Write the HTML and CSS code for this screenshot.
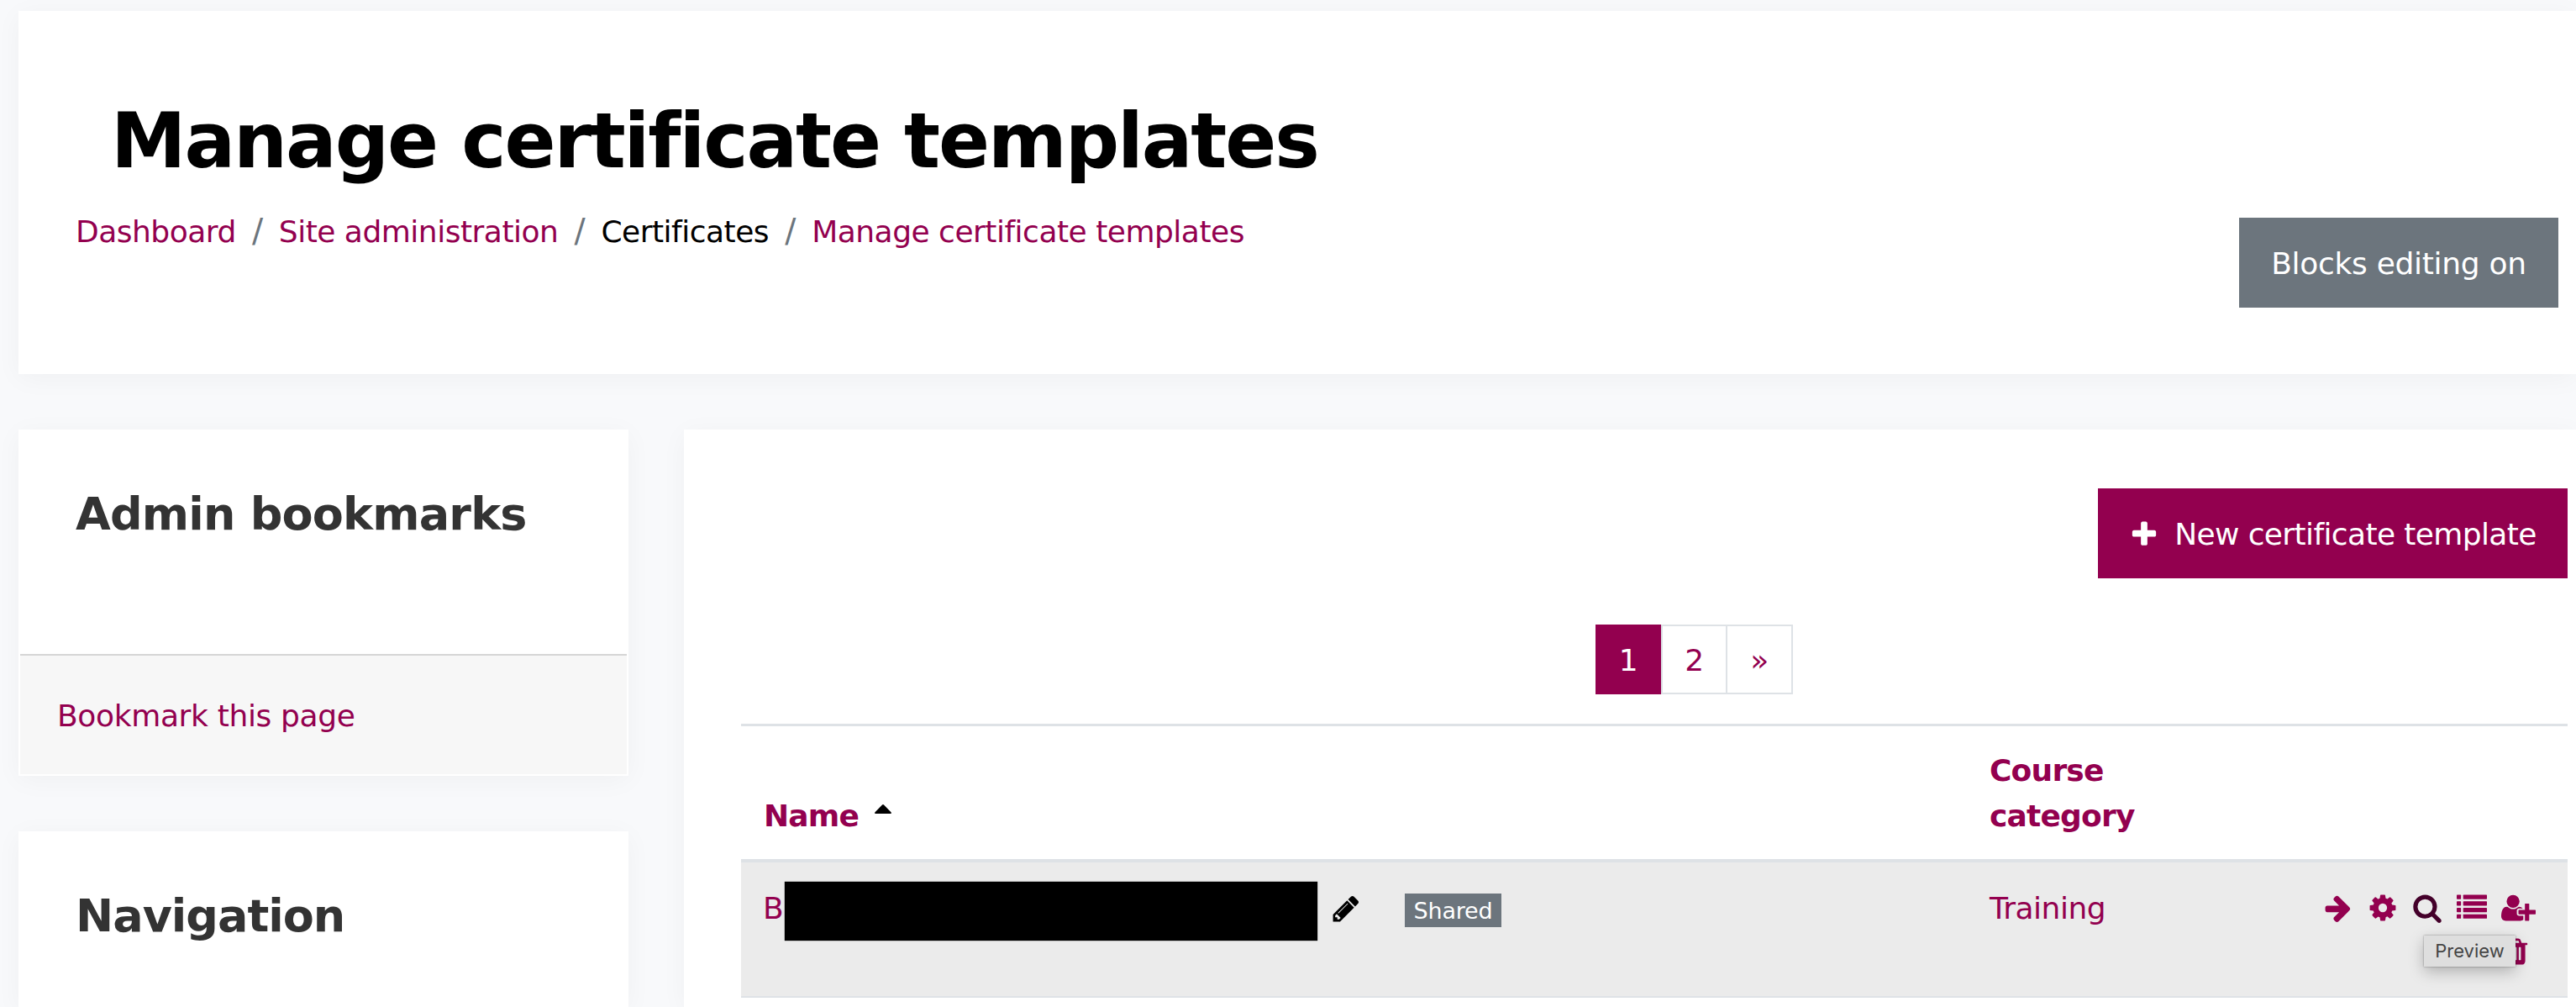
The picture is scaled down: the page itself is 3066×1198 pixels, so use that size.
FILE: index.html
```html
<!DOCTYPE html>
<html lang="en">
<head>
    <meta charset="UTF-8">
    <title>Manage certificate templates</title>
    <link rel="stylesheet" href="styles.css">
</head>
<body>
<header id="page-header" class="card">
    <h1>Manage certificate templates</h1>
    <div class="header-row">
        <ol class="breadcrumb">
            <li><a href="#">Dashboard</a></li>
            <li><a href="#">Site administration</a></li>
            <li>Certificates</li>
            <li><a href="#">Manage certificate templates</a></li>
        </ol>
        <button class="btn btn-secondary">Blocks editing on</button>
    </div>
</header>

<div id="page-content">
    <aside class="sidebar">
        <section class="card block">
            <h2>Admin bookmarks</h2>
            <div class="block-footer"><a href="#">Bookmark this page</a></div>
        </section>
        <section class="card block block-nav">
            <h2>Navigation</h2>
        </section>
    </aside>

    <main class="card main">
        <div class="toolbar">
            <button class="btn btn-primary">
                <svg class="icon" viewBox="0 0 1792 1792"><path d="M1600 736v192q0 40-28 68t-68 28h-416v416q0 40-28 68t-68 28h-192q-40 0-68-28t-28-68v-416h-416q-40 0-68-28t-28-68v-192q0-40 28-68t68-28h416v-416q0-40 28-68t68-28h192q40 0 68 28t28 68v416h416q40 0 68 28t28 68z"/></svg>
                <span>New certificate template</span>
            </button>
        </div>

        <ul class="pagination">
            <li class="active"><a href="#">1</a></li>
            <li><a href="#">2</a></li>
            <li><a href="#">»</a></li>
        </ul>

        <table>
            <thead>
                <tr>
                    <th class="col-name"><a href="#">Name</a><svg class="sort" viewBox="0 0 20 11"><path d="M1 11h18q1.500-.5.500-1.700L11 .6q-1-1-2 0L.5 9.300Q-.5 10.500 1 11z"/></svg></th>
                    <th class="col-category"><a href="#">Course<br>category</a></th>
                    <th></th>
                </tr>
            </thead>
            <tbody>
                <tr>
                    <td>
                        <div class="template-name">
                            <a href="#">B</a>
                            <span class="redacted"></span>
                            <svg class="icon edit" viewBox="0 0 1792 1792"><path d="M491 1536l91-91-235-235-91 91v107h128v128h107zm523-928q0-22-22-22-10 0-17 7l-542 542q-7 7-7 17 0 22 22 22 10 0 17-7l542-542q7-7 7-17zm-54-192l416 416-832 832h-416v-416zm683 96q0 53-37 90l-166 166-416-416 166-165q36-38 90-38 53 0 91 38l235 234q37 39 37 91z"/></svg>
                            <span class="badge">Shared</span>
                        </div>
                    </td>
                    <td class="category"><a href="#">Training</a></td>
                    <td>
                        <div class="actions">
                            <a href="#"><svg class="icon" viewBox="0 0 1792 1792"><path d="M1600 960q0 54-37 91l-651 651q-39 37-91 37-51 0-90-37l-75-75q-38-38-38-91t38-91l293-293h-704q-52 0-84.500-37.500t-32.500-90.500v-128q0-53 32.500-90.500t84.500-37.500h704l-293-294q-38-36-38-90t38-90l75-75q38-38 90-38 53 0 91 38l651 651q37 35 37 90z"/></svg></a>
                            <a href="#"><svg class="icon" viewBox="0 0 1792 1792"><path d="M1152 896q0-106-75-181t-181-75-181 75-75 181 75 181 181 75 181-75 75-181zm512-109v222q0 12-8 23t-20 13l-185 28q-19 54-39 91 35 50 107 138 10 12 10 25t-9 23q-27 37-99 108t-94 71q-12 0-26-9l-138-108q-44 23-91 38-16 136-29 186-7 28-36 28h-222q-14 0-24.500-8.500t-11.500-21.500l-28-184q-49-16-90-37l-141 107q-10 9-25 9-14 0-25-11-126-114-165-168-7-10-7-23 0-12 8-23 15-21 51-66.500t54-70.500q-27-50-41-99l-183-27q-13-2-21-12.500t-8-23.500v-222q0-12 8-23t19-13l186-28q14-46 39-92-40-57-107-138-10-12-10-24 0-10 9-23 26-36 98.500-107.500t94.500-71.500q13 0 26 10l138 107q44-23 91-38 16-136 29-186 7-28 36-28h222q14 0 24.500 8.500t11.500 21.500l28 184q49 16 90 37l142-107q9-9 24-9 13 0 25 10 129 119 165 170 7 8 7 22 0 12-8 23-15 21-51 66.500t-54 70.500q26 50 41 98l183 28q13 2 21 12.500t8 23.500z"/></svg></a>
                            <a href="#" class="preview">
                                <svg class="icon" viewBox="0 0 1792 1792"><path d="M1216 832q0-185-131.500-316.500t-316.500-131.500-316.500 131.500-131.500 316.500 131.500 316.500 316.500 131.500 316.500-131.500 131.500-316.500zm512 832q0 52-38 90t-90 38q-54 0-90-38l-343-342q-179 124-399 124-143 0-273.500-55.500t-225-150-150-225-55.500-273.500 55.500-273.500 150-225 225-150 273.500-55.500 273.500 55.500 225 150 150 225 55.500 273.500q0 220-124 399l343 343q37 37 37 90z"/></svg>
                                <span class="tooltip">Preview</span>
                            </a>
                            <a href="#"><svg class="icon" viewBox="0 0 1792 1792">
                                <rect x="0" y="128" width="256" height="256" rx="32"/><rect x="384" y="128" width="1408" height="256" rx="32"/>
                                <rect x="0" y="512" width="256" height="256" rx="32"/><rect x="384" y="512" width="1408" height="256" rx="32"/>
                                <rect x="0" y="896" width="256" height="256" rx="32"/><rect x="384" y="896" width="1408" height="256" rx="32"/>
                                <rect x="0" y="1280" width="256" height="256" rx="32"/><rect x="384" y="1280" width="1408" height="256" rx="32"/>
                            </svg></a>
                            <a href="#"><svg class="icon icon-wide" viewBox="0 0 2048 1792"><path d="M704 896q-159 0-271.500-112.500t-112.500-271.500 112.500-271.500 271.500-112.500 271.500 112.500 112.500 271.500-112.500 271.500-271.500 112.500zm960 128h352q13 0 22.500 9.500t9.500 22.500v192q0 13-9.500 22.500t-22.500 9.500h-352v352q0 13-9.500 22.500t-22.500 9.500h-192q-13 0-22.500-9.500t-9.500-22.500v-352h-352q-13 0-22.500-9.500t-9.500-22.500v-192q0-13 9.500-22.500t22.500-9.500h352v-352q0-13 9.500-22.500t22.500-9.500h192q13 0 22.500 9.500t9.500 22.500v352zm-736 224q0 52 38 90t90 38h256v238q-68 50-171 50h-874q-121 0-194-69t-73-190q0-53 3.500-103.500t14-109 26.500-108.500 43-97.500 62-81 85.500-53.500 111.500-20q19 0 39 17 79 61 154.500 91.500t164.500 30.500 164.500-30.500 154.500-91.500q20-17 39-17 132 0 217 96h-223q-52 0-90 38t-38 90v192z"/></svg></a>
                            <a href="#" class="delete"><svg class="icon" viewBox="0 0 1792 1792"><path fill-rule="evenodd" d="M704 1376v-704q0-14-9-23t-23-9h-64q-14 0-23 9t-9 23v704q0 14 9 23t23 9h64q14 0 23-9t9-23zm256 0v-704q0-14-9-23t-23-9h-64q-14 0-23 9t-9 23v704q0 14 9 23t23 9h64q14 0 23-9t9-23zm256 0v-704q0-14-9-23t-23-9h-64q-14 0-23 9t-9 23v704q0 14 9 23t23 9h64q14 0 23-9t9-23zm-544-992h448l-48-117q-7-9-17-11h-317q-10 2-17 11zm928 32v64q0 14-9 23t-23 9h-96v948q0 83-47 143.500t-113 60.500h-832q-66 0-113-58.500t-47-141.500v-952h-96q-14 0-23-9t-9-23v-64q0-14 9-23t23-9h309l70-167q15-37 54-63t79-26h320q40 0 79 26t54 63l70 167h309q14 0 23 9t9 23z"/></svg></a>
                        </div>
                    </td>
                </tr>
            </tbody>
        </table>
    </main>
</div>
</body>
</html>
```

FILE: styles.css
```css
* {
    box-sizing: border-box;
}

body {
    margin: 0;
    padding: 13px 0 0 22px;
    height: 1198px;
    overflow: hidden;
    background-color: #f8f9fb;
    color: #000;
    font-family: Verdana, "DejaVu Sans", sans-serif;
    font-size: 36px;
    line-height: 54px;
    letter-spacing: -0.5px;
}

a {
    color: #93004f;
    text-decoration: none;
}

.card {
    background-color: #fff;
    box-shadow: 0 5px 30px rgba(0, 0, 0, 0.04);
}

.icon {
    display: block;
    width: 36px;
    height: 36px;
    fill: currentColor;
}

.icon-wide {
    width: 41px;
}

/* header */
#page-header {
    height: 432px;
    padding: 101px 21px 0 68px;
}

h1 {
    margin: 0 0 26px 42px;
    font-size: 90px;
    line-height: 108px;
    font-weight: bold;
    letter-spacing: -2.1px;
}

.header-row {
    display: flex;
    justify-content: space-between;
    align-items: flex-start;
}

.breadcrumb {
    display: flex;
    margin: 0;
    padding: 1px 0 0;
    list-style: none;
}

.breadcrumb li + li::before {
    content: "/";
    display: inline-block;
    width: 51px;
    font-size: 39px;
    line-height: 1;
    text-align: center;
    color: #6c757d;
}

.btn {
    display: flex;
    align-items: center;
    justify-content: center;
    height: 107px;
    padding: 2px 0 0;
    border: none;
    color: #fff;
    font-family: inherit;
    font-size: 36px;
    white-space: nowrap;
}

.btn-secondary {
    width: 380px;
    margin-top: 11px;
    background-color: #6c757d;
    letter-spacing: -0.3px;
}

.btn-primary {
    width: 559px;
    gap: 18px;
    background-color: #93004f;
    letter-spacing: -0.62px;
}

/* columns */
#page-content {
    display: flex;
    align-items: flex-start;
    gap: 66px;
    margin-top: 66px;
}

.sidebar {
    flex: none;
    width: 726px;
}

.block {
    height: 412px;
    margin-bottom: 66px;
    padding: 69px 2px 2px;
}

.block-nav {
    height: 209px;
    margin-bottom: 0;
}

.block h2 {
    height: 198px;
    margin: 0;
    padding-left: 66px;
    color: #333;
    font-size: 54px;
    line-height: 64px;
    letter-spacing: -0.8px;
}

.block-nav h2 {
    height: 64px;
    letter-spacing: -1px;
}

.block-footer {
    height: 143px;
    padding: 45px 0 0 44px;
    border-top: 2px solid #d6d6d6;
    background-color: #f7f7f7;
    letter-spacing: -0.35px;
}

.main {
    flex: 1;
    height: 687px;
    padding: 70px 10px 0 68px;
}

.toolbar {
    display: flex;
    justify-content: flex-end;
}

.pagination {
    display: flex;
    margin: 55px 0 35px 1017px;
    padding: 0;
    list-style: none;
}

.pagination a {
    display: block;
    width: 80px;
    height: 83px;
    border: 2px solid #dee2e6;
    line-height: 81px;
    text-align: center;
}

.pagination li:nth-child(2) a {
    width: 79px;
    margin-right: -2px;
}

.pagination .active a {
    width: 78px;
    border-color: #93004f;
    background-color: #93004f;
    color: #fff;
}

/* template list */
table {
    width: 2174px;
    table-layout: fixed;
    border-collapse: separate;
    border-spacing: 0;
}

th {
    height: 165px;
    padding: 0 0 24px 27px;
    border-top: 3px solid #dee2e6;
    border-bottom: 4px solid #dee2e6;
    text-align: left;
    vertical-align: bottom;
    letter-spacing: -0.8px;
}

.col-name {
    width: 1459px;
}

.col-category {
    width: 359px;
}

.sort {
    width: 20px;
    height: 11px;
    margin-left: 19px;
    vertical-align: 15px;
}

td {
    height: 161px;
    padding: 23px 0 0 26px;
    border-bottom: 2px solid #dee2e6;
    background-color: #ebebeb;
    vertical-align: top;
}

td.category {
    padding: 28px 0 0 27px;
}

.template-name {
    display: flex;
    align-items: flex-start;
}

.template-name a {
    width: 26px;
    padding-top: 5px;
}

.redacted {
    width: 634px;
    height: 70px;
    background-color: #000;
    box-shadow: 0 0 1px #000;
}

.edit {
    margin: 14px 52px 0 16px;
}

.badge {
    width: 115px;
    height: 40px;
    margin-top: 14px;
    background-color: #6c757d;
    color: #fff;
    font-size: 27px;
    line-height: 41px;
    letter-spacing: -0.2px;
    text-align: center;
}

.actions {
    display: flex;
    flex-wrap: wrap;
    justify-content: flex-end;
    gap: 16px 17px;
    padding: 13px 38px 0 0;
}

.actions .delete {
    margin-right: 6px;
}

.preview {
    position: relative;
    color: #44002a;
}

.tooltip {
    position: absolute;
    z-index: 1;
    top: 51px;
    left: 14px;
    width: 109px;
    height: 37px;
    background-color: #dedede;
    box-shadow: 0 0 2px rgba(0, 0, 0, 0.4), 0 6px 18px rgba(0, 0, 0, 0.25);
    color: #444;
    font-family: Inter, sans-serif;
    font-size: 22px;
    line-height: 37px;
    letter-spacing: 0;
    text-align: center;
}
```
